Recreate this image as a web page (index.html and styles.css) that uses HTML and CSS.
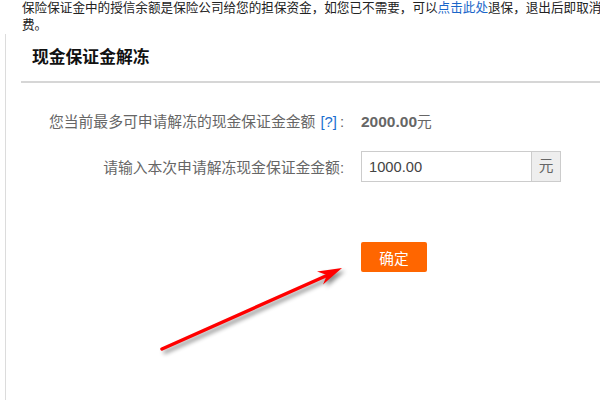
FILE: index.html
```html
<!DOCTYPE html>
<html lang="zh-CN">
<head>
    <meta charset="UTF-8">
    <meta name="viewport" content="width=device-width, initial-scale=1.0">
    <title>现金保证金解冻</title>
    <link rel="stylesheet" href="styles.css">
</head>
<body>
    <div class="page">
        <p class="notice">保险保证金中的授信余额是保险公司给您的担保资金，如您已不需要，可以<a href="#">点击此处</a>退保，退出后即取消<br>费。</p>

        <div class="panel">
            <h2 class="panel-title">现金保证金解冻</h2>

            <div class="form">
                <div class="form-row">
                    <span class="form-label">您当前最多可申请解冻的现金保证金金额 <a class="help" href="#">[?]</a>:</span>
                    <span class="form-value"><b>2000.00</b>元</span>
                </div>
                <div class="form-row">
                    <label class="form-label" for="amount">请输入本次申请解冻现金保证金金额:</label>
                    <div class="input-group">
                        <input type="text" id="amount" value="1000.00">
                        <span class="addon">元</span>
                    </div>
                </div>
                <div class="form-row form-actions">
                    <span></span>
                    <button class="btn-submit">确定</button>
                </div>
            </div>
        </div>

        <!-- annotation arrow drawn over the page -->
        <svg class="arrow" width="600" height="400" viewBox="0 0 600 400">
            <line x1="162" y1="349" x2="328" y2="275" stroke="#f00" stroke-width="3.5" stroke-linecap="round"/>
            <polygon points="342,268 317,271.5 327,275 323,284.5" fill="#f00"/>
        </svg>
    </div>
</body>
</html>
```

FILE: styles.css
```css
* {
    box-sizing: border-box;
    margin: 0;
    padding: 0;
}

html, body {
    height: 100%;
    overflow: hidden;
}

body {
    font-family: "Liberation Sans", "Noto Sans CJK SC", sans-serif;
    background-color: #fff;
    color: #333;
}

.page {
    position: relative;
    width: 620px;
    height: 100%;
}

.notice {
    width: 586px;
    margin-left: 22px;
    font-size: 12.6px;
    line-height: 17px;
    color: #222;
    white-space: nowrap;
}

.notice a {
    color: #1a66c9;
    text-decoration: none;
}

.panel {
    margin-left: 5px;
    border-left: 1px solid #dcdcdc;
    height: 366px;
}

.panel-title {
    margin-left: 15px;
    padding: 1px 11px 0;
    height: 49px;
    line-height: 46px;
    font-size: 16.8px;
    font-weight: bold;
    color: #111;
    border-bottom: 2px solid #d6d6d6;
}

.form {
    padding-top: 22px;
    display: flex;
    flex-direction: column;
    gap: 15px;
}

.form-row {
    display: grid;
    grid-template-columns: 338px auto;
    column-gap: 17px;
    align-items: center;
    height: 31px;
}

.form-label {
    text-align: right;
    font-size: 14.8px;
    color: #666;
    white-space: nowrap;
}

.help {
    margin: 0 3px 0 1px;
    color: #1a6fd0;
    text-decoration: none;
}

.form-value {
    font-size: 14.7px;
    color: #666;
}

.form-value b {
    font-size: 15.5px;
}

.input-group {
    display: flex;
    width: 200px;
    height: 31px;
}

.input-group input {
    width: 171px;
    height: 31px;
    border: 1px solid #ccc;
    padding: 0 7px;
    font-family: "Liberation Sans", sans-serif;
    font-size: 14.7px;
    color: #444;
    outline: none;
}

.addon {
    width: 29px;
    height: 31px;
    line-height: 29px;
    text-align: center;
    border: 1px solid #ccc;
    border-left: none;
    background-color: #eee;
    font-size: 14.7px;
    color: #666;
}

.form-actions {
    margin-top: 45px;
    height: 30px;
}

.btn-submit {
    width: 66px;
    height: 30px;
    background-color: #ff6600;
    color: white;
    border: none;
    border-radius: 2px;
    font-family: "Noto Sans CJK SC", sans-serif;
    font-size: 14.7px;
    cursor: pointer;
}

.arrow {
    position: absolute;
    top: 0;
    left: 0;
    pointer-events: none;
    filter: drop-shadow(3px 3px 2px rgba(0, 0, 0, 0.45));
}
```
